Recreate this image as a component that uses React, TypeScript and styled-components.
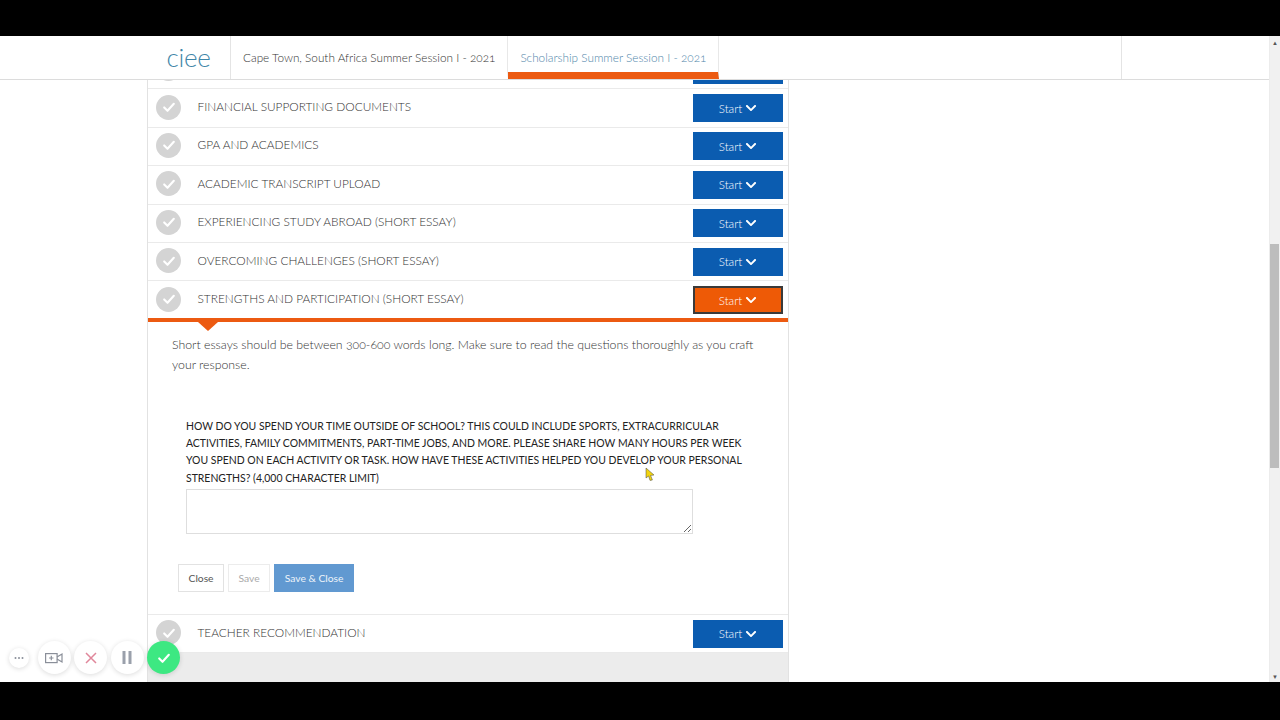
import styled, { createGlobalStyle } from 'styled-components';
import { FaChevronDown } from 'react-icons/fa';

const GlobalStyle = createGlobalStyle`
  html, body {
    margin: 0;
    padding: 0;
    height: 100%;
    overflow: hidden;
    background: #000;
    font-family: Lato, "Open Sans", sans-serif;
  }
  * {
    box-sizing: border-box;
  }
`;

const Screen = styled.div`
  display: flex;
  flex-direction: column;
  width: 1280px;
  height: 720px;
  padding: 36px 0 38px;
  background: #000;
`;

const Viewport = styled.div`
  position: relative;
  display: flex;
  height: 646px;
  background: #fff;
  overflow: hidden;
`;

const Page = styled.div`
  display: flex;
  flex-direction: column;
  flex: 1;
  min-width: 0;
`;

const Header = styled.header`
  position: relative;
  z-index: 2;
  display: flex;
  flex: none;
  height: 44px;
  padding: 0 147px;
  background: #fff;
  border-bottom: 1px solid #dcdcdc;
`;

const HeaderInner = styled.div`
  display: flex;
  flex: 1;
  border-right: 1px solid #e4e4e4;
`;

const LogoCell = styled.div`
  display: flex;
  align-items: center;
  justify-content: center;
  width: 84px;
  padding-bottom: 2px;
  border-right: 1px solid #e4e4e4;
  color: #3f86a8;
  font-size: 26px;
  font-weight: 300;
  letter-spacing: -0.3px;
`;

const Tab = styled.div<{ $active?: boolean }>`
  display: flex;
  align-items: center;
  height: 43px;
  padding: 7px 12px 0;
  border-right: 1px solid #e8e8e8;
  border-bottom: 7px solid ${({ $active }) => ($active ? '#ec5a11' : 'transparent')};
  color: ${({ $active }) => ($active ? '#4f86aa' : '#333')};
  font-size: 11.75px;
  font-weight: 300;
  font-variant-numeric: oldstyle-nums;
  white-space: nowrap;
`;

const Column = styled.main`
  flex: 1;
  width: 642px;
  margin-left: 147px;
  border-left: 1px solid #e2e2e2;
  border-right: 1px solid #e2e2e2;
  background: #ececec;
  overflow: hidden;
`;

const List = styled.div`
  margin-top: -29px;
  background: #fff;
`;

const Row = styled.div`
  display: flex;
  align-items: center;
  height: 38.4px;
  padding: 0 5px 0 8px;
  border-bottom: 1.5px solid #eaeaea;
`;

const CheckCircle = styled.span`
  display: flex;
  align-items: center;
  justify-content: center;
  flex: none;
  width: 25px;
  height: 25px;
  margin-bottom: 2px;
  border-radius: 50%;
  background: #d4d4d4;
  color: #fff;
`;

const RowTitle = styled.span`
  flex: 1;
  padding-left: 16.5px;
  color: #333;
  font-size: 11.85px;
  font-weight: 300;
  margin-top: -3px;
`;

const StartButton = styled.button<{ $focused?: boolean }>`
  display: flex;
  align-items: center;
  justify-content: center;
  gap: 3px;
  flex: none;
  width: 90px;
  height: 28px;
  padding: 0;
  border: ${({ $focused }) => ($focused ? '2px solid #3a3a3a' : '1px solid #0b5cb0')};
  background: ${({ $focused }) => ($focused ? '#ee5a06' : '#0b5cb0')};
  color: #fff;
  font-family: inherit;
  font-size: 11.5px;
  font-weight: 300;
`;

const Panel = styled.section`
  position: relative;
  border-top: 4px solid #ec5a11;
  border-bottom: 1.5px solid #eaeaea;
  margin-top: -2px;
  padding: 13px 24px 22px;
  background: #fff;
`;

const Notch = styled.span`
  position: absolute;
  top: 0;
  left: 50px;
  width: 0;
  height: 0;
  border-left: 10px solid transparent;
  border-right: 10px solid transparent;
  border-top: 9px solid #ec5a11;
`;

const Intro = styled.p`
  margin: 0;
  color: #333;
  font-size: 12.3px;
  font-weight: 300;
  line-height: 20px;
  font-variant-numeric: oldstyle-nums;
`;

const Question = styled.label`
  display: block;
  width: 570px;
  margin: 43px 0 0 14px;
  color: #222;
  font-size: 10.45px;
  line-height: 17.3px;
`;

const Answer = styled.textarea`
  display: block;
  width: 507px;
  height: 45px;
  margin: 2px 0 0 14px;
  border: 1px solid #dedede;
  outline: none;
`;

const Actions = styled.div`
  display: flex;
  gap: 4px;
  margin: 30px 0 0 6px;
`;

const ActionButton = styled.button<{ $kind?: 'muted' | 'primary' }>`
  height: 28px;
  padding: 0 9.5px;
  border: 1px solid ${({ $kind }) => ($kind === 'primary' ? '#6199d1' : $kind === 'muted' ? '#ececec' : '#e2e2e2')};
  background: ${({ $kind }) => ($kind === 'primary' ? '#6199d1' : '#fff')};
  color: ${({ $kind }) => ($kind === 'primary' ? '#eef4fa' : $kind === 'muted' ? '#aaa' : '#555')};
  font-family: inherit;
  font-size: 10.3px;
`;

const Scrollbar = styled.div`
  display: flex;
  flex-direction: column;
  flex: none;
  width: 11px;
  background: #f1f1f1;
  border-left: 1px solid #ececec;
`;

const ScrollArrow = styled.div`
  display: flex;
  align-items: center;
  justify-content: center;
  height: 11px;
  margin-top: 1px;
  color: #555;
  font-size: 6px;
  line-height: 1;
`;

const ScrollThumb = styled.div`
  width: 9px;
  height: 224px;
  margin-top: 196px;
  margin-bottom: auto;
  background: #bdbdbd;
`;

const Recorder = styled.div`
  position: absolute;
  left: 9px;
  bottom: 8px;
  display: flex;
  align-items: center;
  gap: 3.5px;
`;

const RoundButton = styled.span<{ $small?: boolean; $green?: boolean }>`
  display: flex;
  align-items: center;
  justify-content: center;
  width: ${({ $small }) => ($small ? 20 : 33)}px;
  height: ${({ $small }) => ($small ? 20 : 33)}px;
  margin-right: ${({ $small }) => ($small ? 5 : 0)}px;
  border-radius: 50%;
  background: ${({ $green }) => ($green ? '#3de882' : '#fff')};
  color: #fff;
  box-shadow: 0 1px 5px rgba(0, 0, 0, 0.14);
`;

const Cursor = styled.svg`
  position: absolute;
  left: 645px;
  top: 431px;
`;

const Check = ({ size = 14 }: { size?: number }) => (
  <svg width={size} height={size} viewBox="0 0 16 16" fill="none" stroke="currentColor" strokeWidth="2.4" strokeLinecap="round" strokeLinejoin="round">
    <path d="M2.5 8.5l3.8 3.8 7.2-8" />
  </svg>
);

const rows = [
  'FINANCIAL SUPPORTING DOCUMENTS',
  'GPA AND ACADEMICS',
  'ACADEMIC TRANSCRIPT UPLOAD',
  'EXPERIENCING STUDY ABROAD (SHORT ESSAY)',
  'OVERCOMING CHALLENGES (SHORT ESSAY)',
];

// title left out for the row scrolled away under the header
const ItemRow = ({ title, focused }: { title?: string; focused?: boolean }) => (
  <Row>
    <CheckCircle><Check /></CheckCircle>
    <RowTitle>{title}</RowTitle>
    <StartButton $focused={focused}>
      {title && <>Start <FaChevronDown size={12} /></>}
    </StartButton>
  </Row>
);

export default function App() {
  return (
    <Screen>
      <GlobalStyle />
      <Viewport>
        <Page>
          <Header>
            <HeaderInner>
              <LogoCell>ciee</LogoCell>
              <Tab>Cape Town, South Africa Summer Session I - 2021</Tab>
              <Tab $active>Scholarship Summer Session I - 2021</Tab>
            </HeaderInner>
          </Header>
          <Column>
            <List>
              <ItemRow />
              {rows.map((title) => (
                <ItemRow key={title} title={title} />
              ))}
              <ItemRow title="STRENGTHS AND PARTICIPATION (SHORT ESSAY)" focused />
              <Panel>
                <Notch />
                <Intro>
                  Short essays should be between 300-600 words long. Make sure to read the questions thoroughly as you craft your response.
                </Intro>
                <Question htmlFor="answer">
                  HOW DO YOU SPEND YOUR TIME OUTSIDE OF SCHOOL? THIS COULD INCLUDE SPORTS, EXTRACURRICULAR ACTIVITIES, FAMILY COMMITMENTS, PART-TIME JOBS, AND MORE. PLEASE SHARE HOW MANY HOURS PER WEEK YOU SPEND ON EACH ACTIVITY OR TASK. HOW HAVE THESE ACTIVITIES HELPED YOU DEVELOP YOUR PERSONAL STRENGTHS? (4,000 CHARACTER LIMIT)
                </Question>
                <Answer id="answer" />
                <Actions>
                  <ActionButton>Close</ActionButton>
                  <ActionButton $kind="muted">Save</ActionButton>
                  <ActionButton $kind="primary">Save &amp; Close</ActionButton>
                </Actions>
              </Panel>
              <ItemRow title="TEACHER RECOMMENDATION" />
            </List>
          </Column>
        </Page>
        <Scrollbar>
          <ScrollArrow>▲</ScrollArrow>
          <ScrollThumb />
          <ScrollArrow>▼</ScrollArrow>
        </Scrollbar>
        <Recorder>
          <RoundButton $small>
            <svg width="10" height="4" viewBox="0 0 10 4" fill="#8a8f99"><circle cx="1.5" cy="2" r="1" /><circle cx="5" cy="2" r="1" /><circle cx="8.5" cy="2" r="1" /></svg>
          </RoundButton>
          <RoundButton>
            <svg width="18" height="12" viewBox="0 0 18 12" fill="none" stroke="#8a8f99" strokeWidth="1.2">
              <rect x="0.6" y="1.6" width="11.5" height="9" />
              <path d="M12 5l5-3v8l-5-3M6.3 3.8v4.4M4.1 6h4.4" />
            </svg>
          </RoundButton>
          <RoundButton>
            <svg width="12" height="12" viewBox="0 0 12 12" stroke="#e0879b" strokeWidth="1.5"><path d="M1 1l10 10M11 1L1 11" /></svg>
          </RoundButton>
          <RoundButton>
            <svg width="10" height="13" viewBox="0 0 10 13" fill="#9aa0ab"><rect x="0.5" width="3" height="13" /><rect x="6.5" width="3" height="13" /></svg>
          </RoundButton>
          <RoundButton $green>
            <Check />
          </RoundButton>
        </Recorder>
        <Cursor width="10" height="14" viewBox="0 0 10 14">
          <path d="M1 1l8 7-3.4.4L7.4 13 5 13.4 3.6 9 1 11z" fill="#f2d40f" stroke="#444" strokeWidth="0.5" />
        </Cursor>
      </Viewport>
    </Screen>
  );
}
